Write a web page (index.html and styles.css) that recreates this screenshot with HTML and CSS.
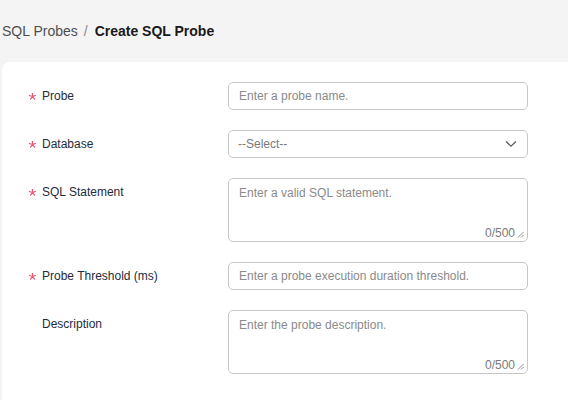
FILE: index.html
```html
<!DOCTYPE html>
<html>
<head>
<meta charset="utf-8">
<link rel="stylesheet" href="styles.css">
</head>
<body>
<div class="page">
  <div class="breadcrumb">
    <span class="crumb">SQL Probes</span>
    <span class="sep">/</span>
    <span class="current">Create SQL Probe</span>
  </div>
  <div class="card">
    <div class="form">
      <div class="row">
        <div class="label"><span class="star"><svg width="7" height="7" viewBox="0 0 7 7"><path d="M3.5 3.5 L3.5 0.2 M3.5 3.5 L6.64 2.48 M3.5 3.5 L5.44 6.17 M3.5 3.5 L1.56 6.17 M3.5 3.5 L0.36 2.48" stroke="#f0526e" stroke-width="1.2" stroke-linecap="round"/></svg></span><span>Probe</span></div>
        <div class="control"><input class="input" type="text" placeholder="Enter a probe name."></div>
      </div>
      <div class="row">
        <div class="label"><span class="star"><svg width="7" height="7" viewBox="0 0 7 7"><path d="M3.5 3.5 L3.5 0.2 M3.5 3.5 L6.64 2.48 M3.5 3.5 L5.44 6.17 M3.5 3.5 L1.56 6.17 M3.5 3.5 L0.36 2.48" stroke="#f0526e" stroke-width="1.2" stroke-linecap="round"/></svg></span><span>Database</span></div>
        <div class="control">
          <div class="select">
            <span class="select-text">--Select--</span>
            <svg class="chev" width="12" height="8" viewBox="0 0 12 8"><path d="M1 1.5 L6 6.2 L11 1.5" fill="none" stroke="#575d6c" stroke-width="1.3"/></svg>
          </div>
        </div>
      </div>
      <div class="row">
        <div class="label"><span class="star"><svg width="7" height="7" viewBox="0 0 7 7"><path d="M3.5 3.5 L3.5 0.2 M3.5 3.5 L6.64 2.48 M3.5 3.5 L5.44 6.17 M3.5 3.5 L1.56 6.17 M3.5 3.5 L0.36 2.48" stroke="#f0526e" stroke-width="1.2" stroke-linecap="round"/></svg></span><span>SQL Statement</span></div>
        <div class="control">
          <div class="ta-wrap">
            <textarea class="textarea" placeholder="Enter a valid SQL statement."></textarea>
            <span class="counter">0/500</span>
            <svg class="grip" width="7" height="7" viewBox="0 0 7 7"><path d="M6.5 1 L1 6.5 M6.5 4 L4 6.5" stroke="#8a8e99" stroke-width="1"/></svg>
          </div>
        </div>
      </div>
      <div class="row">
        <div class="label"><span class="star"><svg width="7" height="7" viewBox="0 0 7 7"><path d="M3.5 3.5 L3.5 0.2 M3.5 3.5 L6.64 2.48 M3.5 3.5 L5.44 6.17 M3.5 3.5 L1.56 6.17 M3.5 3.5 L0.36 2.48" stroke="#f0526e" stroke-width="1.2" stroke-linecap="round"/></svg></span><span>Probe Threshold (ms)</span></div>
        <div class="control"><input class="input" type="text" placeholder="Enter a probe execution duration threshold."></div>
      </div>
      <div class="row">
        <div class="label"><span class="star"></span><span>Description</span></div>
        <div class="control">
          <div class="ta-wrap">
            <textarea class="textarea" placeholder="Enter the probe description."></textarea>
            <span class="counter">0/500</span>
            <svg class="grip" width="7" height="7" viewBox="0 0 7 7"><path d="M6.5 1 L1 6.5 M6.5 4 L4 6.5" stroke="#8a8e99" stroke-width="1"/></svg>
          </div>
        </div>
      </div>
    </div>
  </div>
</div>
</body>
</html>
```
FILE: styles.css
```css
* { box-sizing: border-box; }
html, body {
  margin: 0;
  padding: 0;
  height: 100%;
  background: #f4f4f4;
  font-family: "Liberation Sans", Arial, sans-serif;
  overflow: hidden;
}
.page {
  display: flex;
  flex-direction: column;
  height: 100%;
}
.breadcrumb {
  height: 62px;
  display: flex;
  align-items: center;
  padding-left: 2px;
  font-size: 14px;
  line-height: 16px;
  padding-bottom: 1px;
}
.crumb { color: #4e4e4e; }
.sep { color: #8a8a8a; margin: 0 7px 0 6px; }
.current { color: #191919; font-weight: bold; }
.card {
  flex: 1;
  margin-left: 2px;
  background: #fff;
  border-radius: 8px 0 0 0;
  padding: 20px 0 0 27px;
}
.form {
  display: flex;
  flex-direction: column;
  gap: 20px;
}
.row {
  display: flex;
  align-items: flex-start;
}
.label {
  width: 199px;
  flex: none;
  display: flex;
  align-items: center;
  height: 28px;
  font-size: 12px;
  color: #252b3a;
}
.star {
  width: 13px;
  height: 7px;
  display: flex;
  align-items: center;
  margin-top: 1px;
}
.star svg { display: block; }
.control {
  width: 300px;
  flex: none;
}
.input, .select, .textarea {
  width: 300px;
  border: 1px solid #c7c7c7;
  border-radius: 5px;
  font-family: "Liberation Sans", Arial, sans-serif;
  font-size: 12px;
  color: #252b3a;
  background: #fff;
  outline: none;
}
.input {
  height: 28px;
  padding: 0 10px;
}
.input::placeholder, .textarea::placeholder { color: #8a8a8a; opacity: 1; }
.select {
  height: 28px;
  padding: 0 10px 0 9px;
  display: flex;
  align-items: center;
  justify-content: space-between;
}
.select-text { color: #7a7a7a; }
.ta-wrap {
  position: relative;
  width: 300px;
  height: 64px;
}
.textarea {
  display: block;
  height: 64px;
  padding: 5px 10px;
  line-height: 18px;
  resize: none;
}
.counter {
  position: absolute;
  right: 13px;
  bottom: 2px;
  font-size: 12px;
  line-height: 14px;
  color: #7a7a7a;
}
.grip {
  position: absolute;
  right: 4px;
  bottom: 4px;
}
```
